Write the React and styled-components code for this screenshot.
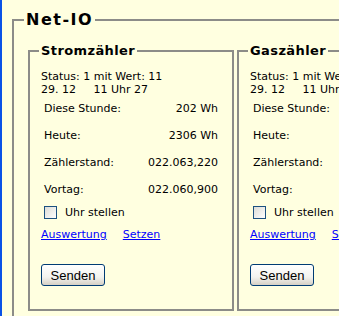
import React from 'react';
import styled, { createGlobalStyle } from 'styled-components';

const GlobalStyle = createGlobalStyle`
   html, body {
      margin: 0;
      padding: 0;
      background: #ffffe0;
      overflow: hidden;
   }
   body {
      font-family: "DejaVu Sans", Verdana, sans-serif;
      font-size: 11px;
      color: #000;
   }
`;

const meters = [
   {
      title: 'Stromzähler',
      rows: [
         ['Diese Stunde:', '202 Wh'],
         ['Heute:', '2306 Wh'],
         ['Zählerstand:', '022.063,220'],
         ['Vortag:', '022.060,900'],
      ],
   },
   {
      title: 'Gaszähler',
      rows: [
         ['Diese Stunde:', '1 m³'],
         ['Heute:', '12 m³'],
         ['Zählerstand:', '004.512,310'],
         ['Vortag:', '004.498,020'],
      ],
   },
];

function Meter({ meter }) {
   return (
      <InnerSet>
         <InnerLegend>{meter.title}</InnerLegend>
         <Status>
            Status: 1 mit Wert: 11
            <br />
            29. 12&nbsp;&nbsp;&nbsp;&nbsp;&nbsp;11 Uhr 27
         </Status>
         <Rows>
            {meter.rows.map(([label, value]) => (
               <Row key={label}>
                  <span>{label}</span>
                  <span>{value}</span>
               </Row>
            ))}
         </Rows>
         <CheckLine>
            <CheckBox />
            Uhr stellen
         </CheckLine>
         <Links>
            <Link href="#">Auswertung</Link>
            <Link href="#">Setzen</Link>
         </Links>
         <Button>Senden</Button>
      </InnerSet>
   );
}

export default function App() {
   return (
      <>
         <GlobalStyle />
         <Page>
            <OuterSet>
               <OuterLegend>Net-IO</OuterLegend>
               <Columns>
                  {meters.map((m) => (
                     <Meter key={m.title} meter={m} />
                  ))}
               </Columns>
            </OuterSet>
         </Page>
      </>
   );
}

const Page = styled.div`
   width: 600px;
   height: 316px;
   border-left: 2px solid #0a52e6;
   padding: 10px 0 0 10px;
   box-sizing: border-box;
`;

const OuterSet = styled.fieldset`
   margin: 0;
   width: 520px;
   height: 400px;
   box-sizing: border-box;
   border: 2px solid #8c8c88;
   padding: 14px 0 0 14px;
`;

const OuterLegend = styled.legend`
   font-family: "Comic Sans MS", "DejaVu Sans", sans-serif;
   font-weight: bold;
   font-size: 16px;
   letter-spacing: 1.5px;
   padding: 0 2px;
   margin-left: -4px;
`;

const Columns = styled.div`
   display: flex;
   gap: 3px;
`;

const InnerSet = styled.fieldset`
   margin: 0;
   width: 206px;
   height: 268px;
   box-sizing: border-box;
   border: 2px solid #8c8c88;
   padding: 12px 12px 0 11px;
`;

const InnerLegend = styled.legend`
   font-family: "Comic Sans MS", "DejaVu Sans", sans-serif;
   font-weight: bold;
   font-size: 13px;
   letter-spacing: 0.4px;
   padding: 0 2px;
   margin-left: -2px;
`;

const Status = styled.div`
   line-height: 13px;
`;

const Rows = styled.div`
   display: flex;
   flex-direction: column;
   gap: 13px;
   margin-top: 6px;
   padding: 0 2px 0 3px;
`;

const Row = styled.div`
   display: flex;
   justify-content: space-between;
   line-height: 14px;
`;

const CheckLine = styled.label`
   display: flex;
   align-items: center;
   gap: 8px;
   margin-top: 9px;
   padding-left: 3px;
`;

const CheckBox = styled.span`
   width: 11px;
   height: 11px;
   border: 1px solid #1c5180;
   background: linear-gradient(135deg, #dcdcd7 0%, #fefefe 100%);
`;

const Links = styled.div`
   display: flex;
   gap: 16px;
   margin-top: 9px;
`;

const Link = styled.a`
   color: #0000ff;
   text-decoration: underline;
`;

const Button = styled.button`
   margin-top: 23px;
   width: 64px;
   height: 22px;
   border: 1px solid #003c74;
   border-radius: 3px;
   background: linear-gradient(180deg, #ffffff 0%, #f3f3ef 60%, #d6d0c5 100%);
   font-family: "Liberation Sans", Arial, sans-serif;
   font-size: 13px;
   padding: 0;
`;
